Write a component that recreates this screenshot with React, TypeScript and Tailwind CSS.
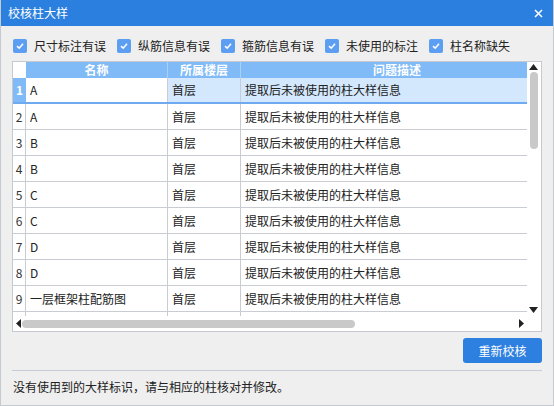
import React from "react";

const checks = ["尺寸标注有误", "纵筋信息有误", "箍筋信息有误", "未使用的标注", "柱名称缺失"];
const rows = [
  { name: "A", floor: "首层" },
  { name: "A", floor: "首层" },
  { name: "B", floor: "首层" },
  { name: "B", floor: "首层" },
  { name: "C", floor: "首层" },
  { name: "C", floor: "首层" },
  { name: "D", floor: "首层" },
  { name: "D", floor: "首层" },
  { name: "一层框架柱配筋图", floor: "首层" },
  { name: "", floor: "" },
];
const desc = "提取后未被使用的柱大样信息";

function CheckBox() {
  return (
    <span className="flex h-[14px] w-[14px] items-center justify-center rounded-[2px] bg-[#5b9ef2]">
      <svg width="10" height="10" viewBox="0 0 10 10">
        <path d="M2 5.2 L4.2 7.2 L8 2.8" fill="none" stroke="#fff" strokeWidth="1.6" />
      </svg>
    </span>
  );
}

export default function App() {
  return (
    <div
      className="flex h-[406px] w-[554px] flex-col border-x border-b border-[#c4cad2] bg-[#efefef] text-[12px] text-[#222]"
      style={{ fontFamily: '"Noto Sans CJK SC", "Noto Sans", sans-serif' }}
    >
      {/* title bar */}
      <div className="flex h-[26px] shrink-0 items-center justify-between bg-[#2b7fde] pl-[7px] pr-[10px] text-white">
        <span className="text-[12px]">校核柱大样</span>
        <svg width="9" height="9" viewBox="0 0 9 9">
          <path d="M1 1 L8 8 M8 1 L1 8" stroke="#fff" strokeWidth="1.5" />
        </svg>
      </div>

      <div className="flex flex-1 flex-col px-[11px]">
        {/* filters */}
        <div className="mt-[13px] flex h-[14px] items-center pl-[1px]">
          {checks.map((c) => (
            <div key={c} className="mr-[11px] flex items-center gap-[7px]">
              <CheckBox />
              <span className="leading-[14px]">{c}</span>
            </div>
          ))}
        </div>

        {/* table */}
        <div className="mt-[8px] flex h-[271px] w-[530px] flex-col border border-[#c6c9cf] bg-white">
          <div className="flex h-[254px]">
            <div className="w-[514px] overflow-hidden">
              <div className="flex h-[16px] w-[540px] bg-[#80bbf7] font-bold text-white leading-[16px]">
                <div className="w-[13px] shrink-0 bg-white" />
                <div className="w-[142px] shrink-0 border-r border-[#a9d0fa] text-center">名称</div>
                <div className="w-[73px] shrink-0 border-r border-[#a9d0fa] text-center">所属楼层</div>
                <div className="w-[312px] shrink-0 text-center">问题描述</div>
              </div>
              {rows.map((r, i) => {
                const sel = i === 0;
                return (
                  <div
                    key={i}
                    className={
                      sel
                        ? "flex h-[26px] w-[540px] border-b-2 border-[#6fa9ef] bg-[#d4e8fd]"
                        : "flex h-[26px] w-[540px] border-b border-[#c9ccd2]"
                    }
                  >
                    <div
                      className={
                        sel
                          ? "flex w-[13px] shrink-0 items-center justify-center bg-[#80bbf7] font-bold text-white"
                          : "flex w-[13px] shrink-0 items-center justify-center border-r border-[#c9ccd2] text-[#333]"
                      }
                    >
                      {r.name ? i + 1 : ""}
                    </div>
                    <div
                      className={
                        sel
                          ? "flex w-[142px] shrink-0 items-center border-r border-[#c9ccd2] bg-white pl-[4px]"
                          : "flex w-[142px] shrink-0 items-center border-r border-[#c9ccd2] pl-[4px]"
                      }
                    >
                      {r.name}
                    </div>
                    <div className="flex w-[73px] shrink-0 items-center border-r border-[#c9ccd2] pl-[4px]">
                      {r.floor}
                    </div>
                    <div className="flex w-[312px] shrink-0 items-center pl-[4px]">{r.name ? desc : ""}</div>
                  </div>
                );
              })}
            </div>
            {/* vertical scrollbar */}
            <div className="flex w-[13px] flex-col items-center bg-white">
              <svg width="9" height="6" viewBox="0 0 9 6" className="mt-[2px]">
                <path d="M0 6 L4.5 0 L9 6 Z" fill="#222" />
              </svg>
              <div className="mt-[2px] h-[77px] w-[8px] rounded-[4px] bg-[#c9c9c9]" />
              <div className="flex-1" />
              <svg width="9" height="6" viewBox="0 0 9 6" className="mb-[3px]">
                <path d="M0 0 L9 0 L4.5 6 Z" fill="#222" />
              </svg>
            </div>
          </div>
          {/* horizontal scrollbar */}
          <div className="flex h-[15px] items-center bg-white pl-[3px] pr-[17px]">
            <svg width="5" height="9" viewBox="0 0 5 9">
              <path d="M5 0 L0 4.5 L5 9 Z" fill="#222" />
            </svg>
            <div className="ml-[1px] h-[8px] w-[333px] rounded-[4px] bg-[#c9c9c9]" />
            <div className="flex-1" />
            <svg width="5" height="9" viewBox="0 0 5 9">
              <path d="M0 0 L5 4.5 L0 9 Z" fill="#222" />
            </svg>
          </div>
        </div>

        {/* button */}
        <div className="mt-[6px] flex w-[530px] justify-end">
          <button className="h-[25px] w-[79px] rounded-[3px] bg-[#2d80e0] text-[12px] text-white">重新校核</button>
        </div>

        <div className="mt-[7px] h-px w-[530px] bg-[#c5ccd6]" />
        <div className="flex h-[32px] items-center pl-[1px]">没有使用到的大样标识，请与相应的柱核对并修改。</div>
      </div>
    </div>
  );
}
